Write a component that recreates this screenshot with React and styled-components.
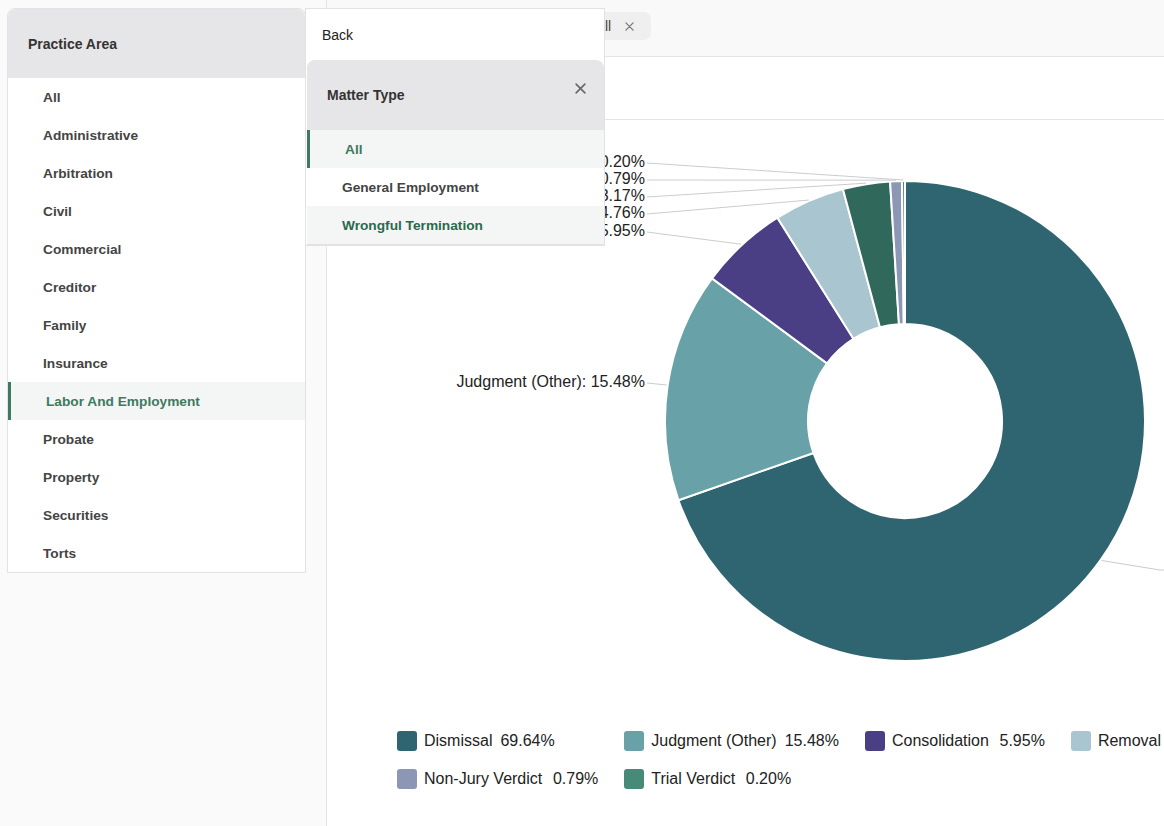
import React from 'react';
import styled, { createGlobalStyle } from 'styled-components';

const GlobalStyle = createGlobalStyle`
  html, body {
    margin: 0;
    padding: 0;
    overflow: hidden;
  }
  body {
    font-family: "Liberation Sans", Arial, sans-serif;
    color: #222;
    background: #fff;
  }
`;

const Page = styled.div`
  position: relative;
  display: flex;
  width: 1164px;
  height: 826px;
  overflow: hidden;
`;

const Sidebar = styled.div`
  flex: none;
  width: 326px;
  background: #fafafa;
  border-right: 1px solid #e4e4e4;
`;

const Main = styled.div`
  flex: 1;
  min-width: 0;
  display: flex;
  flex-direction: column;
  overflow: hidden;
  background: #fff;
`;

const TopBar = styled.div`
  flex: none;
  height: 57px;
  box-sizing: border-box;
  padding: 12px 0 0 176px;
  background: #f9f9f9;
  border-bottom: 1px solid #e4e4e4;
  display: flex;
  align-items: flex-start;
`;

const Chip = styled.div`
  height: 28px;
  display: flex;
  align-items: center;
  gap: 14px;
  padding: 0 17px 0 12px;
  border-radius: 7px;
  background: #efefef;
  font-size: 14px;
  color: #444;
`;

const TabBar = styled.div`
  flex: none;
  height: 62px;
  border-bottom: 1px solid #e4e4e4;
`;

const ChartArea = styled.div`
  flex: 1;
  display: flex;
  flex-direction: column;
`;

const ChartSvg = styled.svg`
  display: block;
  flex: none;
`;

const Legend = styled.div`
  display: grid;
  width: max-content;
  grid-template-columns: repeat(5, max-content);
  column-gap: 26px;
  row-gap: 18px;
  padding: 11px 0 0 70px;
`;

const LegendItem = styled.div`
  display: flex;
  align-items: center;
  font-size: 16px;
  color: #222;
  white-space: nowrap;
`;

const Swatch = styled.span`
  width: 20px;
  height: 20px;
  border-radius: 3px;
  background: ${({ color }) => color};
  margin-right: 7px;
`;

const LegendValue = styled.span`
  display: inline-block;
  min-width: 48px;
  margin-left: 8px;
  text-align: right;
`;

/* dropdown panels lying over the page */
const Panel = styled.div`
  position: absolute;
  top: 8px;
  left: ${({ left }) => left}px;
  width: ${({ width }) => width}px;
  box-sizing: border-box;
  background: #fff;
  border: 1px solid #e2e2e2;
  border-radius: ${({ rounded }) => (rounded ? '8px 8px 0 0' : '0')};
  z-index: 10;
`;

const PanelHeader = styled.div`
  position: relative;
  height: ${({ height }) => height}px;
  display: flex;
  align-items: center;
  padding-left: 20px;
  background: #e6e6e8;
  border-radius: 8px 8px 0 0;
  font-size: 14px;
  font-weight: 700;
  color: #333;
`;

const CloseButton = styled.span`
  position: absolute;
  top: 23px;
  right: 18px;
  display: flex;
  color: #666;
`;

const MenuItem = styled.div`
  height: 38px;
  display: flex;
  align-items: center;
  box-sizing: border-box;
  padding-left: 35px;
  border-left: ${({ active }) => (active ? '3px solid #3e7a5f' : 'none')};
  background: ${({ active, hover }) => (active || hover ? '#f4f6f5' : '#fff')};
  font-size: 13.7px;
  font-weight: 700;
  color: ${({ active, hover }) => (active ? '#3e7a5f' : hover ? '#2a6a4f' : '#444')};
`;

const BackRow = styled.div`
  height: 51px;
  display: flex;
  align-items: center;
  padding-left: 16px;
  font-size: 14px;
  color: #222;
`;

const SubPanel = styled.div`
  margin-left: 1px;
  border-bottom: 1px solid #e2e2e2;
`;

const XIcon = ({ size = 11, color = '#666' }) => (
  <svg width={size} height={size} viewBox="0 0 10 10">
    <path d="M1 1 L9 9 M9 1 L1 9" stroke={color} strokeWidth="1.4" strokeLinecap="round" />
  </svg>
);

const practiceAreas = [
  'All', 'Administrative', 'Arbitration', 'Civil', 'Commercial', 'Creditor', 'Family',
  'Insurance', 'Labor And Employment', 'Probate', 'Property', 'Securities', 'Torts',
];

const slices = [
  { name: 'Dismissal', value: 69.64, color: '#2f6570' },
  { name: 'Judgment (Other)', value: 15.48, color: '#68a2a8', labelY: 261 },
  { name: 'Consolidation', value: 5.95, color: '#4a3f85', labelY: 110 },
  { name: 'Removal', value: 4.76, color: '#a9c6d0', labelY: 92 },
  { name: 'Settlement', value: 3.17, color: '#30695c', labelY: 75 },
  { name: 'Non-Jury Verdict', value: 0.79, color: '#8b97b4', labelY: 58 },
  { name: 'Trial Verdict', value: 0.2, color: '#458b78', labelY: 41 },
];

const CX = 578;
const CY = 301;
const R = 240;
const RI = 97;

const pt = (r, a) => [CX + r * Math.sin(a), CY - r * Math.cos(a)];

const arcPath = (a0, a1) => {
  const large = a1 - a0 > Math.PI ? 1 : 0;
  const [x0, y0] = pt(R, a0);
  const [x1, y1] = pt(R, a1);
  const [x2, y2] = pt(RI, a1);
  const [x3, y3] = pt(RI, a0);
  return `M${x0} ${y0} A${R} ${R} 0 ${large} 1 ${x1} ${y1} L${x2} ${y2} A${RI} ${RI} 0 ${large} 0 ${x3} ${y3} Z`;
};

const DonutChart = () => {
  const total = slices.reduce((s, d) => s + d.value, 0);
  let acc = 0;
  const arcs = slices.map((d) => {
    const a0 = (acc / total) * Math.PI * 2;
    acc += d.value;
    const a1 = (acc / total) * Math.PI * 2;
    return { ...d, a0, a1, mid: (a0 + a1) / 2 };
  });

  return (
    <ChartSvg width="837" height="600">
      {arcs.map((d) => (
        <path key={d.name} d={arcPath(d.a0, d.a1)} fill={d.color} stroke="#fff" strokeWidth="2" strokeLinejoin="round" />
      ))}
      {arcs.map((d) => {
        const [sx, sy] = pt(R + 1, d.mid);
        if (d.labelY === undefined) {
          // label of the big slice sits past the right edge
          return (
            <polyline key={d.name} points={`${sx},${sy} ${833},${450} ${860},${450}`} fill="none" stroke="#ccc" strokeWidth="1" />
          );
        }
        return (
          <g key={d.name}>
            <polyline points={`${320},${d.labelY + 2} ${sx},${sy}`} fill="none" stroke="#ccc" strokeWidth="1" />
            <text x="318" y={d.labelY} textAnchor="end" dominantBaseline="central" fontSize="16" fill="#222">
              {d.name}: {d.value.toFixed(2)}%
            </text>
          </g>
        );
      })}
    </ChartSvg>
  );
};

export default function App() {
  return (
    <>
      <GlobalStyle />
      <Page>
        <Sidebar />
        <Main>
          <TopBar>
            <Chip>
              Matter Type: All
              <XIcon size={9} color="#777" />
            </Chip>
          </TopBar>
          <TabBar />
          <ChartArea>
            <DonutChart />
            <Legend>
              {slices.map((d) => (
                <LegendItem key={d.name}>
                  <Swatch color={d.color} />
                  {d.name}
                  <LegendValue>{d.value.toFixed(2)}%</LegendValue>
                </LegendItem>
              ))}
            </Legend>
          </ChartArea>
        </Main>

        <Panel left={7} width={299} rounded>
          <PanelHeader height={69}>Practice Area</PanelHeader>
          {practiceAreas.map((name) => (
            <MenuItem key={name} active={name === 'Labor And Employment'}>
              {name}
            </MenuItem>
          ))}
        </Panel>

        <Panel left={305} width={300}>
          <BackRow>Back</BackRow>
          <SubPanel>
            <PanelHeader height={70}>
              Matter Type
              <CloseButton>
                <XIcon size={11} color="#666" />
              </CloseButton>
            </PanelHeader>
            <MenuItem active>All</MenuItem>
            <MenuItem>General Employment</MenuItem>
            <MenuItem hover>Wrongful Termination</MenuItem>
          </SubPanel>
        </Panel>
      </Page>
    </>
  );
}
